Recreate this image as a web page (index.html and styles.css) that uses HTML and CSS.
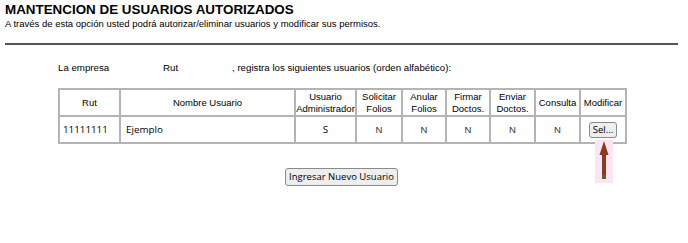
FILE: index.html
```html
<!DOCTYPE html>
<html lang="es">
<head>
<meta charset="utf-8">
<title>Mantencion de usuarios autorizados</title>
<link rel="stylesheet" href="styles.css">
</head>
<body>
<h1 class="title">MANTENCION DE USUARIOS AUTORIZADOS</h1>
<p class="subtitle">A través de esta opción usted podrá autorizar/eliminar usuarios y modificar sus permisos.</p>
<hr class="rule">
<p class="intro"><span class="intro-a">La empresa</span><span class="intro-b">Rut</span><span>, registra los siguientes usuarios (orden alfabético):</span></p>
<div class="table-wrap">
<table class="users">
<colgroup>
<col class="c-rut"><col class="c-name"><col class="c-admin"><col class="c-sol"><col class="c-anu"><col class="c-fir"><col class="c-env"><col class="c-con"><col class="c-mod">
</colgroup>
<thead>
<tr>
<th>Rut</th><th>Nombre Usuario</th><th>Usuario Administrador</th><th>Solicitar Folios</th><th>Anular Folios</th><th>Firmar Doctos.</th><th>Enviar Doctos.</th><th>Consulta</th><th>Modificar</th>
</tr>
</thead>
<tbody>
<tr>
<td class="data left">11111111</td><td class="data left name">Ejemplo</td><td class="data">S</td><td>N</td><td>N</td><td>N</td><td>N</td><td>N</td><td class="mod"><button class="btn sel">Sel...<span class="arrow"><svg width="18" height="43" viewBox="0 0 18 43"><rect x="0" y="0" width="18" height="43" fill="#fbe4f6"/><polygon points="9,1 13.5,15 4.5,15" fill="#8b3a1c"/><rect x="7" y="13" width="4" height="25" fill="#8b3a1c"/><rect x="7" y="35" width="4" height="4" fill="#6b5a22"/></svg></span></button></td>
</tr>
</tbody>
</table>
<div class="actions"><button class="btn big">Ingresar Nuevo Usuario</button></div>
</div>
</body>
</html>
```
FILE: styles.css
```css
html, body { margin: 0; padding: 0; background: #fff; }
body {
  padding: 2px 5px;
  font-family: "Liberation Sans", Arial, sans-serif;
  color: #000;
  width: 688px;
  box-sizing: border-box;
}
.title {
  margin: 0;
  font-size: 13.4px;
  font-weight: bold;
  line-height: 15px;
}
.subtitle {
  margin: 1px 0 0;
  font-size: 9.5px;
  line-height: 12px;
}
.rule {
  margin: 13px 5px 0 0;
  border: 0;
  height: 2px;
  background: #555;
}
.intro {
  margin: 17px 0 0 53px;
  font-size: 9.7px;
  line-height: 12px;
  display: flex;
}
.intro-a { width: 105px; }
.intro-b { width: 69px; }
.table-wrap { margin: 14px 0 0 53px; width: 567px; }
.users {
  border: 2px solid #a6a6a6;
  border-collapse: collapse;
  table-layout: fixed;
  width: 567px;
  font-size: 9.5px;
}
.c-rut { width: 61px; }
.c-name { width: 175px; }
.c-admin { width: 61px; }
.c-sol { width: 46px; }
.c-anu { width: 44px; }
.c-fir { width: 44px; }
.c-env { width: 45px; }
.c-con { width: 45px; }
.c-mod { width: 46px; }
.users th, .users td {
  border: 2px solid #b4b4b4;
  padding: 0;
  text-align: center;
  font-weight: normal;
  line-height: 12px;
  height: 25px;
}
.users td { color: #333; }
.users td.left { text-align: left; padding-left: 3px; }
.users td.data { font-family: "Open Sans", sans-serif; font-size: 9.8px; color: #000; }
.users td.name { padding-left: 5px; }
.btn {
  font-family: "Open Sans", sans-serif;
  font-size: 9.5px;
  line-height: 12px;
  padding: 1px 3px;
  background: #eeeeee;
  border: 1px solid #8a8a8a;
  border-radius: 3px;
  color: #000;
}
.sel { position: relative; }
.arrow {
  position: absolute;
  left: 5px;
  top: 17px;
  width: 18px;
  height: 43px;
}
.actions {
  display: flex;
  justify-content: center;
  margin-top: 24px;
}
.big { padding: 2px 3px; }
```
